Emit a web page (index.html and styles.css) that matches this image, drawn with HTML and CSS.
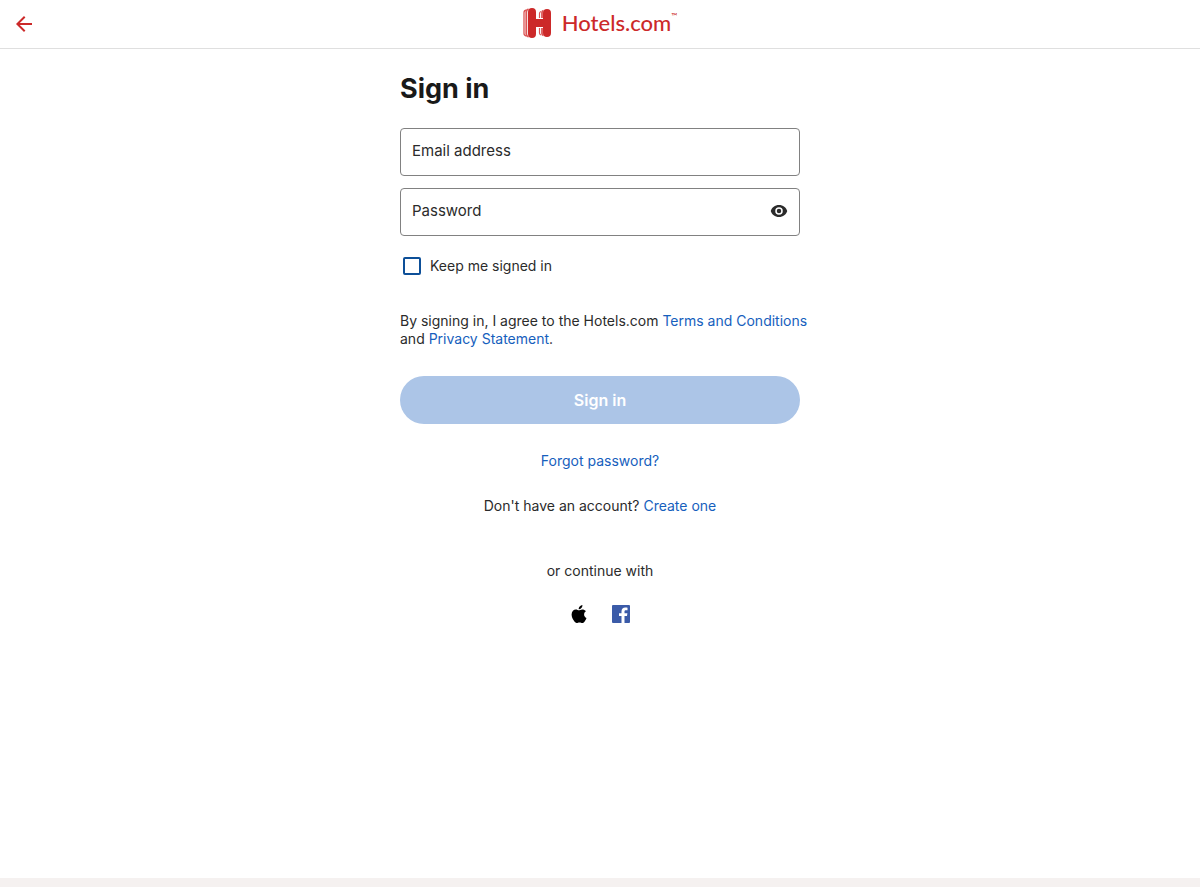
FILE: index.html
```html
<!DOCTYPE html>
<html lang="en">
<head>
<meta charset="utf-8">
<meta name="viewport" content="width=device-width, initial-scale=1">
<title>Sign in - Hotels.com</title>
<link rel="stylesheet" href="styles.css">
</head>
<body>
<header class="toolbar">
  <button class="back" type="button" aria-label="Go back">
    <svg width="24" height="24" viewBox="0 0 24 24" fill="#cc2929" aria-hidden="true"><path d="M20 11H7.830l5.590-5.590L12 4l-8 8 8 8 1.410-1.410L7.830 13H20z"/></svg>
  </button>
  <a class="brand" href="#" aria-label="Hotels.com">
    <svg class="brand-mark" width="28" height="30" viewBox="0 0 28 30" aria-hidden="true">
      <g fill="none" stroke="#dc5555">
        <path d="M3.500 2Q1 2.500 1 4.500v21q0 2 2.500 2.500" stroke-width="1.300"/>
        <path d="M5.500 1Q3.300 1.800 3.300 4v22q0 2.200 2.200 3" stroke-width="1.800"/>
        <path d="M16.500 10V5.500q0-1.500 1.500-2M16.500 20v5q0 1.500 1.500 2" stroke-width="1.200"/>
        <path d="M19 10V4.500q0-1.500 1.500-2M19 20v5.500q0 1.500 1.500 2" stroke-width="1.800"/>
      </g>
      <path fill="#cc2929" d="M5 4a4 4 0 0 1 8 0v7h7V5a4 4 0 0 1 8 0v20a4 4 0 0 1-8 0v-6h-7v7a4 4 0 0 1-8 0z"/>
    </svg>
    <span class="brand-name">Hotels.com</span><span class="brand-tm">™</span>
  </a>
</header>
<main class="page">
  <form class="signin">
    <h1 class="title">Sign in</h1>
    <div class="fields">
      <input class="field" type="email" placeholder="Email address" aria-label="Email address">
      <div class="password">
        <input class="field field-password" type="password" placeholder="Password" aria-label="Password">
        <button class="reveal" type="button" aria-label="Show password">
          <svg width="18" height="18" viewBox="0 0 24 24" fill="#2b2b2b" aria-hidden="true"><path d="M12 4C6.500 4 2.500 7.200 1 12c1.500 4.800 5.500 8 11 8s9.500-3.200 11-8c-1.500-4.800-5.500-8-11-8zm0 13a5 5 0 1 1 0-10 5 5 0 0 1 0 10zm0-8a3 3 0 1 0 0 6 3 3 0 0 0 0-6z"/></svg>
        </button>
      </div>
    </div>
    <label class="remember"><input class="checkbox" type="checkbox">Keep me signed in</label>
    <p class="legal">By signing in, I agree to the Hotels.com <a href="#">Terms and Conditions</a> and <a href="#">Privacy Statement</a>.</p>
    <button class="submit" type="submit" disabled>Sign in</button>
    <p class="forgot"><a href="#">Forgot password?</a></p>
    <p class="create">Don't have an account? <a href="#">Create one</a></p>
    <p class="social-label">or continue with</p>
    <div class="social">
      <button class="social-button" type="button" aria-label="Sign in with Apple">
        <svg width="18" height="20" viewBox="0 0 18 20" aria-hidden="true"><path d="M12.400 1c.1 1.200-.4 2.300-1.100 3.100-.7.800-1.600 1.300-2.600 1.200-.1-1.100.4-2.200 1-2.900.7-.8 1.800-1.300 2.700-1.400zM16 7.200c-1.200.7-1.900 1.800-1.900 3.300 0 1.600.9 2.900 2.400 3.500-.4 1.200-1 2.200-1.700 3.200-.7 1-1.400 1.800-2.500 1.800-1.100 0-1.500-.6-2.800-.6s-1.800.6-2.800.6c-1.100 0-1.900-.9-2.600-1.900C2.700 15.200 1.600 13 1.600 10.600c0-3.300 2.100-5.100 4.300-5.100 1.200 0 2.300.8 3 .8s1.900-.9 3.400-.9c1.300 0 2.700.5 3.700 1.800z"/></svg>
      </button>
      <button class="social-button" type="button" aria-label="Sign in with Facebook">
        <svg width="18" height="18" viewBox="0 0 18 18" aria-hidden="true"><rect width="18" height="18" rx="1" fill="#3b5ba8"/><path fill="#fff" d="M9.500 18v-7H7V8.200h2.500V6.500c0-2.500 1.500-3.900 3.800-3.900 1 0 1.700.1 2.200.1v2.500h-1.600c-1.200 0-1.400.6-1.400 1.400v1.600h2.900l-.4 2.800h-2.500v7z"/></svg>
      </button>
    </div>
  </form>
</main>
<footer class="page-end"></footer>
</body>
</html>
```
FILE: styles.css
```css
* { box-sizing: border-box; }

body {
  display: flex;
  flex-direction: column;
  min-height: 100vh;
  margin: 0;
  background: #fff;
  color: #2b2b2b;
  font: 14px/18px Inter, "Liberation Sans", sans-serif;
}

button { padding: 0; border: 0; background: none; font: inherit; cursor: pointer; }
a { color: #1660bd; text-decoration: none; }
p { margin: 0; }
svg { display: block; }

.toolbar {
  display: grid;
  grid-template-columns: 1fr auto 1fr;
  align-items: center;
  height: 49px;
  padding: 0 12px;
  border-bottom: 1px solid #dfdfdf;
}

.back { justify-self: start; }

.brand { display: flex; align-items: center; color: #cc2929; padding-bottom: 2px; }
.brand-name { margin-left: 11px; font: 500 22px/30px Lato, sans-serif; }
.brand-tm { align-self: flex-start; font: 400 8px/16px Lato, sans-serif; }

.page { flex: 1; padding: 24px 16px; }
.signin { max-width: 400px; margin: 0 auto; }
.title { margin: 0 0 24px; color: #191919; font-size: 27px; line-height: 31px; font-weight: 700; }

.fields { display: grid; gap: 12px; }
.field {
  display: block;
  width: 100%;
  height: 48px;
  padding: 0 11px 4px;
  border: 1px solid #818181;
  border-radius: 4px;
  background: #fff;
  color: #2b2b2b;
  font: 15px/20px Inter, "Liberation Sans", sans-serif;
}
.field::placeholder { color: #2b2b2b; opacity: 1; }
.field-password { padding-right: 48px; }
.password { position: relative; }
.reveal { position: absolute; top: 14px; right: 12px; }

.remember { display: flex; align-items: center; gap: 9px; margin: 21px 0 37px 3px; }
.checkbox {
  appearance: none;
  width: 18px;
  height: 18px;
  margin: 0;
  border: 2px solid #0d4f98;
  border-radius: 2px;
  background: #fff;
}
.checkbox:checked { background: #0d4f98; }

.legal { margin-right: -16px; }

.submit {
  display: block;
  width: 100%;
  height: 48px;
  margin: 28px 0;
  border-radius: 24px;
  background: #acc5e7;
  color: #fff;
  font-size: 16px;
  font-weight: 600;
}

.forgot, .create, .social-label { text-align: center; }
.create { margin: 27px 0 47px; }
.social { display: flex; justify-content: center; align-items: center; gap: 24px; margin-top: 24px; }

.page-end { height: 9px; background: #f5f1f0; }
```
